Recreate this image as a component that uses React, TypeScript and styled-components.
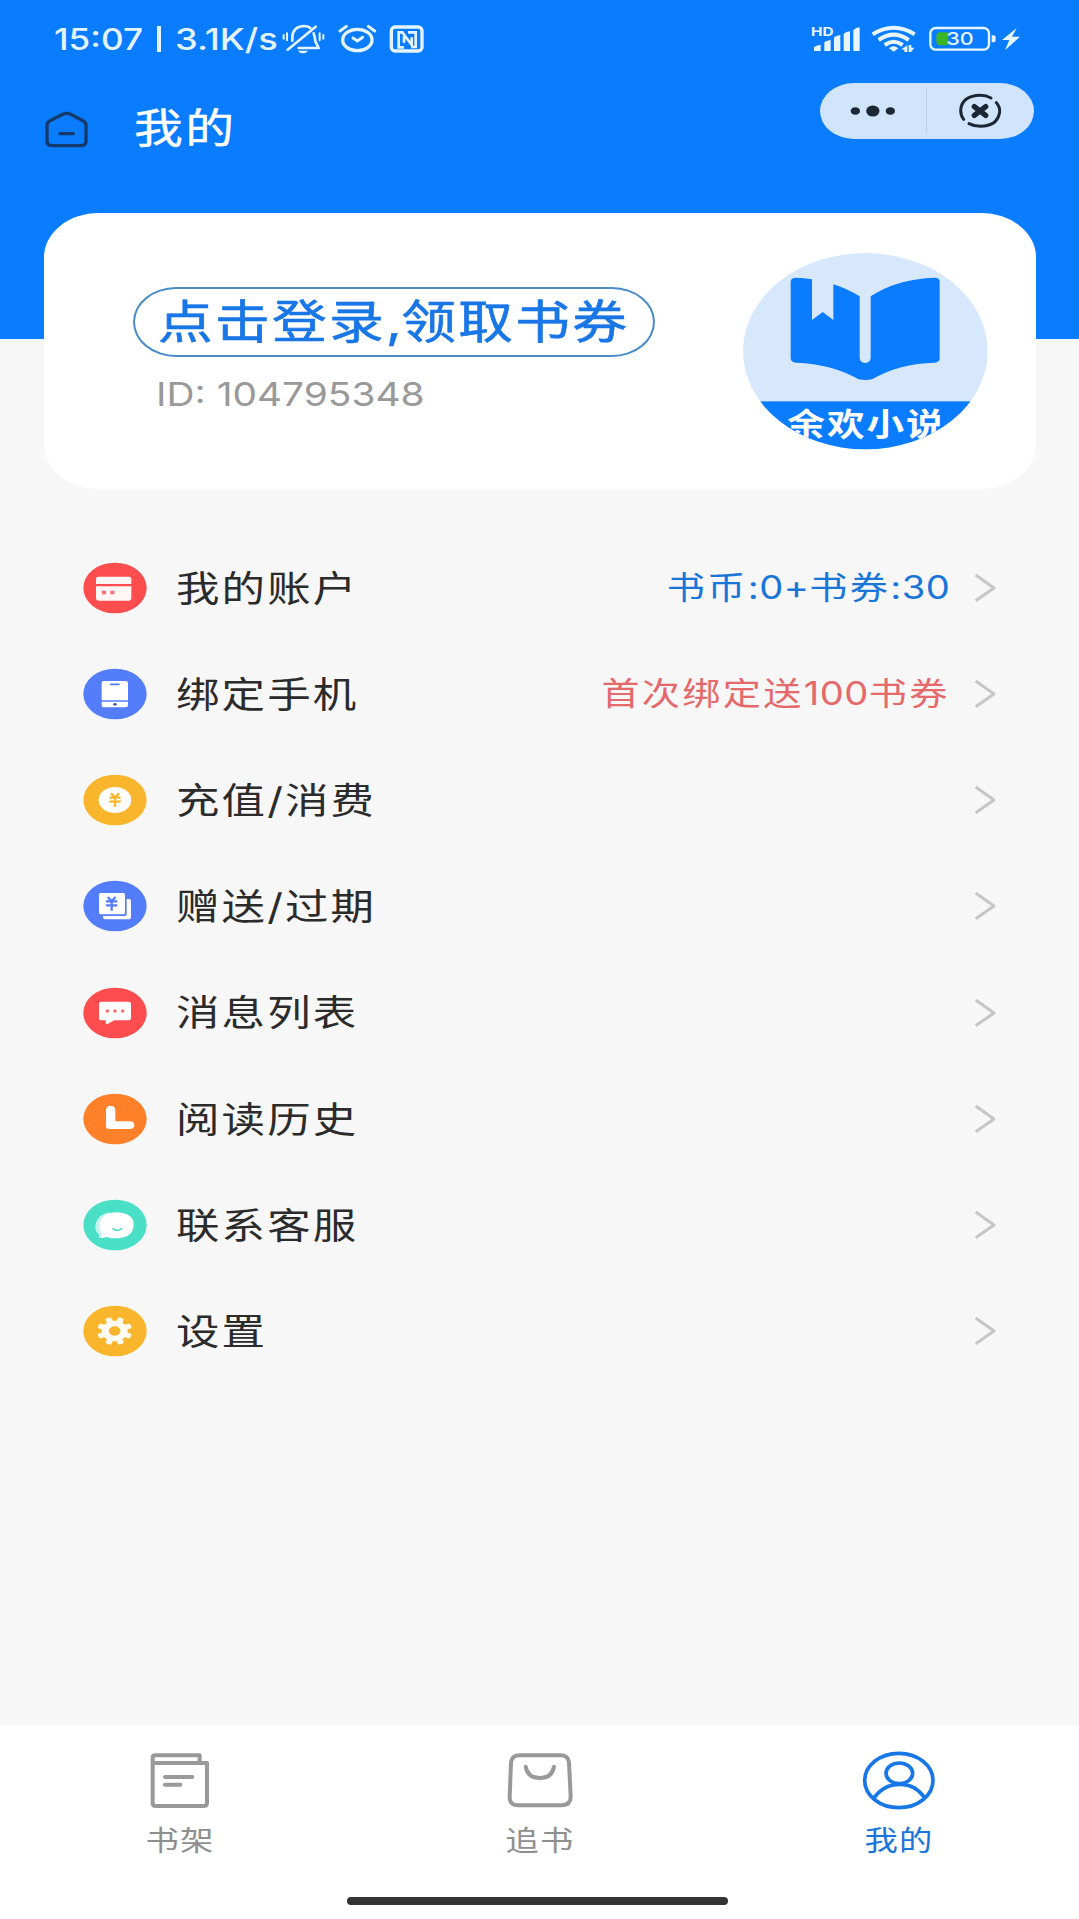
import React from "react";
import styled, { createGlobalStyle } from "styled-components";

const BLUE = "#0a7cff";

const GlobalStyle = createGlobalStyle`
  * { box-sizing: border-box; }
  body {
    margin: 0;
    background: #f7f7f7;
    font-family: Inter, "Noto Sans CJK SC", sans-serif;
  }
  svg { display: block; flex: none; }
`;

const Screen = styled.div`
  width: 1079px;
  height: 1919px;
  display: flex;
  flex-direction: column;
  overflow: hidden;
  background: #f7f7f7;
`;

/* Wide-set text: every label is stretched horizontally from its anchor side. */
const Wide = styled.span<{
  $size: number;
  $color: string;
  $k?: number;
  $ls?: number;
  $weight?: number;
  $stroke?: number;
  $from?: "left" | "right" | "center";
}>`
  display: inline-block;
  flex: none;
  white-space: pre;
  line-height: 1;
  font-size: ${(p) => p.$size}px;
  font-weight: ${(p) => p.$weight ?? 400};
  letter-spacing: ${(p) => p.$ls ?? 0}px;
  color: ${(p) => p.$color};
  -webkit-text-stroke: ${(p) => p.$stroke ?? 0}px ${(p) => p.$color};
  transform: scaleX(${(p) => p.$k ?? 1.19});
  transform-origin: ${(p) => p.$from ?? "left"} center;
`;

const Latin = styled.span<{ $ls: number }>`
  letter-spacing: ${(p) => p.$ls}px;
`;

const Header = styled.header`
  height: 338.5px;
  flex: none;
  background: ${BLUE};
`;

const StatusBar = styled.div`
  height: 78px;
  display: flex;
  align-items: center;
  padding: 0 59px 0 54px;
`;

const StatusText = styled.div`
  width: 228px;
  display: flex;
  align-items: center;
`;

const ClockSlot = styled.div`
  width: 102.5px;
`;

const StatusDivider = styled.div`
  width: 4px;
  height: 26px;
  margin-right: 14px;
  background: #e4f4ff;
`;

const StatusRight = styled.div`
  margin-left: auto;
`;

const TitleBar = styled.div`
  display: flex;
  align-items: flex-start;
  padding: 5px 45px 0 45px;
`;

const HomeButton = styled.div`
  width: 89px;
  padding-top: 28px;
`;

const Title = styled.div`
  padding-top: 25px;
`;

const Capsule = styled.div`
  margin-left: auto;
  width: 214px;
  height: 56px;
  border-radius: 34px / 28px;
  background: #d0e4fc;
  display: flex;
  align-items: center;
  margin-right: 0.5px;
`;

const CapsuleHalf = styled.div`
  flex: 1;
  display: flex;
  justify-content: center;
`;

const CapsuleDivider = styled.div`
  width: 1px;
  height: 44px;
  background: #b9cfe9;
`;

const Card = styled.section`
  width: 992.5px;
  height: 276px;
  flex: none;
  margin: -126px 0 0 43.5px;
  border-radius: 55px / 44px;
  background: #fff;
  display: flex;
  padding: 40px 48px 0 89px;
`;

const CardInfo = styled.div`
  padding-top: 34px;
`;

const LoginPill = styled.div`
  width: 522px;
  height: 70px;
  border: 2px solid #4a8cc8;
  border-radius: 43px / 35px;
  display: flex;
  align-items: center;
  padding: 0 0 2px 23.5px;
`;

const UserId = styled.div`
  padding: 21px 0 0 23.5px;
`;

const AvatarSlot = styled.div`
  margin-left: auto;
`;

const Menu = styled.ul`
  flex: 1;
  list-style: none;
  margin: 0;
  padding: 46.5px 82px 0 83px;
`;

const Row = styled.li`
  height: 106.15px;
  display: flex;
  align-items: center;
`;

const RowLabel = styled.div`
  flex: 1;
  padding: 2px 0 0 29px;
`;

const RowValue = styled.div`
  margin-right: 24px;
`;

const TabBar = styled.nav`
  height: 194px;
  flex: none;
  background: #fff;
  display: flex;
  flex-direction: column;
  align-items: center;
`;

const Tabs = styled.div`
  width: 1079px;
  height: 172px;
  display: flex;
`;

const Tab = styled.div`
  flex: 1;
  display: flex;
  flex-direction: column;
  align-items: center;
  padding-top: 26px;
  gap: 17px;
`;

const HomeIndicator = styled.div`
  width: 381px;
  height: 8px;
  margin-left: -4px;
  border-radius: 4px;
  background: #333;
`;

/* Letter spacing applies to the Chinese glyphs only; digits and punctuation are set tight. */
const mixed = (text: string, latin: number) =>
  text.split(/([\x20-\x7e]+)/).map((part, i) => (i % 2 ? <Latin key={i} $ls={latin}>{part}</Latin> : part));

const StatusIcons = () => (
  <svg width="142" height="30" viewBox="756 72 426 90" fill="none" stroke="#e4f4ff" strokeWidth="8" strokeLinecap="round">
    <path d="M773 149 L857 80" />
    <path d="M787 122 V110 Q790 79 822 78 Q834 78 841 84" />
    <path d="M851 100 Q855 112 856 124 L866 144 H806" strokeLinejoin="round" />
    <path d="M804 152 H834 Q829 160 819 160 Q809 160 804 152 Z" fill="#e4f4ff" stroke="none" />
    <path d="M761 105 V116 M771 100 V121 M869 100 V121 M880 105 V116" strokeWidth="6" />
    <ellipse cx="982" cy="120" rx="44" ry="32" strokeWidth="10" />
    <path d="M930 93 L949 79 M1015 79 L1034 93" strokeWidth="9" />
    <path d="M969 114 L982 123 L998 112" strokeWidth="9" />
    <rect x="1084" y="81" width="92" height="72" rx="11" strokeWidth="10" />
    <path d="M1122 142 H1106 V97 H1117 L1145 135 V112 M1122 108 V128 M1134 97 H1157 V141 H1143" strokeLinecap="butt" />
  </svg>
);

const SignalIcons = () => (
  <svg width="209" height="30" viewBox="94 72 627 90" fill="#e6f5ff">
    <text transform="translate(94 107) scale(1.24 1)" fontFamily="Inter, sans-serif" fontWeight="700" fontSize="37">HD</text>
    <path d="M103 153 V142 Q112 135 123 134 V153 Z M134 153 V127 Q142 121 153 120 V153 Z M163 153 V112 Q171 106 182 105 V153 Z M192 153 V101 Q200 95 211 94 V153 Z M221 153 V90 Q229 83 240 82 V153 Z" />
    <g fill="none" stroke="#e6f5ff" strokeWidth="12">
      <path d="M279 103 Q342 64 405 103" />
      <path d="M297 120 Q342 88 387 120" />
      <path d="M315 135 Q342 116 369 135" />
    </g>
    <path d="M328 145 Q342 133 356 145 L342 155 Z" />
    <path d="M365 148 L383 136 V156 H374 V149 Z M387 156 V135 H395 V143 H404 L394 156 Z" />
    <rect x="452" y="84" width="176" height="65" rx="16" fill="none" stroke="#e6f5ff" strokeWidth="7" />
    <path d="M483 97 H506 V136 H483 Q470 136 470 123 V110 Q470 97 483 97 Z" fill="#3cb527" />
    <path d="M636 106 H640 Q648 106 648 113 V120 Q648 127 640 127 H636 Z" />
    <text transform="translate(500 136) scale(1.22 1)" fontFamily="Inter, sans-serif" fontWeight="500" fontSize="53">30</text>
    <path d="M711 84 L667 120 H689 L676 151 L721 110 H697 Z" />
  </svg>
);

const HomeIcon = () => (
  <svg width="43" height="37" viewBox="45 330 129 111" fill="none" stroke="#143a6c" strokeWidth="10" strokeLinecap="round" strokeLinejoin="round">
    <path d="M51 373 Q51 364 60 359 L98 340 Q110 334 122 340 L159 359 Q168 364 168 373 V420 Q168 434 152 434 H67 Q51 434 51 420 Z" />
    <path d="M90 398 H130" />
  </svg>
);

const DotsIcon = () => (
  <svg width="46" height="12" viewBox="209 314 138 36" fill="#1c2733">
    <ellipse cx="225" cy="332" rx="14" ry="11.5" />
    <ellipse cx="277.5" cy="332" rx="20" ry="16.5" />
    <ellipse cx="330" cy="332" rx="14" ry="11.5" />
  </svg>
);

const CloseIcon = () => (
  <svg width="44" height="36" viewBox="533 277 132 108" fill="none" stroke="#1c2733" strokeWidth="9" strokeLinecap="round">
    <path d="M550 356 Q541 345 541 328 Q545 285 600 284 Q618 284 632 292" />
    <path d="M648 306 Q659 318 658 334 Q652 376 600 377 Q581 377 566 369" />
    <path d="M582 318 L616 344 M616 318 L582 344" strokeWidth="16" />
  </svg>
);

const Avatar = () => (
  <svg width="245" height="197" viewBox="131 157 735 591">
    <defs>
      <clipPath id="oval">
        <ellipse cx="498" cy="451.5" rx="367" ry="294.5" />
      </clipPath>
    </defs>
    <g clipPath="url(#oval)">
      <rect x="131" y="157" width="735" height="591" fill="#d8e8fc" />
      <rect x="131" y="602" width="735" height="150" fill={BLUE} />
      <text
        transform="translate(264 707) scale(1.2 1)"
        fontFamily='"Noto Sans CJK SC", sans-serif'
        fontWeight="700"
        fontSize="94"
        letterSpacing="5"
        fill="#fff"
      >
        余欢小说
      </text>
    </g>
    <path
      fill={BLUE}
      d="M274 244 Q274 231 290 231 Q316 231 338 236 V358 L370 334 L402 358 V251 Q443 264 481 287 V472 Q482 486 497 487 Q513 486 514 472 V287 Q592 235 706 231 Q721 231 721 243 V473 Q721 485 706 486 Q600 488 518 536 Q498 540 478 536 Q398 490 290 486 Q274 485 274 473 Z"
    />
  </svg>
);

const Badge = ({ top, color, children }: { top: number; color: string; children: React.ReactNode }) => (
  <svg width="64" height="52" viewBox={`71 ${top} 192 156`}>
    <ellipse cx="167" cy={top + 78} rx="95" ry="76" fill={color} />
    {children}
  </svg>
);

const AccountIcon = () => (
  <Badge top={65} color="#fd4d4f">
    <path d="M117 109 H209 Q216 109 216 116 V131 H110 V116 Q110 109 117 109 Z M110 138 H216 V174 Q216 181 209 181 H117 Q110 181 110 174 Z" fill="#fff6f5" />
    <path d="M128 151 H140 V162 H128 Z M153 151 H165 V162 H153 Z" fill="#fd6d6d" />
  </Badge>
);

const PhoneIcon = () => (
  <Badge top={384} color="#547dfb">
    <path d="M133 423 H199 Q206 423 206 430 V481 H127 V430 Q127 423 133 423 Z M127 485 H206 V496 Q206 502 199 502 H133 Q127 502 127 496 Z" fill="#fff" />
    <path d="M154 433 H179" stroke="#547dfb" strokeWidth="5" strokeLinecap="round" />
    <ellipse cx="167" cy="493" rx="5" ry="4" fill="#3556b8" />
  </Badge>
);

const Yen = ({ x, y, color }: { x: number; y: number; color: string }) => (
  <g transform={`translate(${x} ${y})`} stroke={color} strokeWidth="7" fill="none">
    <path d="M-12 -20 L0 -8 L12 -20 M-17 -7 H17 M-17 5 H17 M0 -8 V21" />
  </g>
);

const CoinIcon = () => (
  <Badge top={702} color="#f9b62c">
    <ellipse cx="167" cy="780" rx="49" ry="39" fill="#fff" />
    <Yen x={167} y={780} color="#f9b62c" />
  </Badge>
);

const GiftIcon = () => (
  <Badge top={1020} color="#547dfb">
    <rect x="119" y="1059" width="78" height="64" rx="5" fill="#fff" />
    <path d="M202 1077 H208 Q215 1077 215 1083 V1130 Q215 1138 207 1138 H138 Q131 1138 131 1132 V1128 H197 Q202 1128 202 1123 Z" fill="#fff" />
    <Yen x={157} y={1091} color="#547dfb" />
  </Badge>
);

const MessageIcon = () => (
  <Badge top={109} color="#fd4d4f">
    <path d="M125 153 H209 Q215 153 215 159 V203 Q215 209 208 209 H165 L143 221 Q139 222 139 209 H125 Q119 209 119 203 V159 Q119 153 125 153 Z" fill="#fff" />
    <g fill="#fd6d6d">
      <ellipse cx="144" cy="181" rx="5.5" ry="5" />
      <ellipse cx="167" cy="181" rx="5.5" ry="5" />
      <ellipse cx="190" cy="181" rx="5.5" ry="5" />
    </g>
  </Badge>
);

const HistoryIcon = () => (
  <Badge top={427} color="#fe8029">
    <path d="M140 479 Q140 465 154 465 Q168 465 168 479 V512 H212 Q225 513 225 524 Q225 535 212 535 H150 Q140 535 140 526 Z" fill="#fff" />
  </Badge>
);

const ServiceIcon = () => (
  <Badge top={745} color="#4adfc7">
    <path d="M108 826 Q112 792 152 785 V860 L134 856 Q126 862 117 861 Q121 856 118 851 Q107 841 108 826 Z" fill="#c4f5ed" />
    <path d="M174 785 Q224 788 223 823 Q221 862 172 863 Q152 863 141 858 Q131 864 124 861 Q131 854 127 847 Q120 838 121 823 Q124 787 174 785 Z" fill="#fff" />
    <path d="M161 834 Q174 845 187 834" stroke="#4adfc7" strokeWidth="5" fill="none" strokeLinecap="round" />
  </Badge>
);

const SettingsIcon = () => (
  <Badge top={1064} color="#f9b62c">
    <g transform="translate(166 1142) scale(1.25 1)" fill="#fffaf0">
      {[0, 45, 90, 135].map((a) => (
        <rect key={a} x="-7.5" y="-42" width="15" height="84" rx="4" transform={`rotate(${a + 22.5})`} />
      ))}
      <circle r="31" />
      <circle r="14" fill="#f9b62c" />
    </g>
  </Badge>
);

const Chevron = () => (
  <svg width="23" height="30" viewBox="1183 98 69 90" fill="none" stroke="#c6c6c6" strokeWidth="9" strokeLinejoin="round">
    <path d="M1188 104 L1243 143 L1188 181" />
  </svg>
);

const ShelfIcon = () => (
  <svg width="60" height="59" viewBox="151 124 180 177" fill="none" stroke="#999" strokeWidth="12" strokeLinejoin="round">
    <path d="M159 160 V143 Q159 137 167 137 H300 V160" />
    <path d="M159 160 H322 V281 Q322 289 313 289 H168 Q159 289 159 281 Z" />
    <path d="M196 202 H278 M196 225 H242" strokeLinecap="round" />
  </svg>
);

const BagIcon = () => (
  <svg width="68" height="59" viewBox="1218 124 204 177" fill="none" stroke="#999" strokeWidth="12" strokeLinecap="round">
    <path d="M1260 137 H1380 Q1405 137 1407 158 L1412 262 Q1412 286 1385 287 H1255 Q1228 286 1229 262 L1233 158 Q1235 137 1260 137 Z" />
    <path d="M1277 171 Q1283 205 1320 205 Q1356 205 1362 171" />
  </svg>
);

const UserIcon = () => (
  <svg width="74" height="59" viewBox="787 121 222 177" fill="none" stroke="#1877e6" strokeWidth="11">
    <ellipse cx="897.5" cy="209.5" rx="102.5" ry="81.5" />
    <ellipse cx="899" cy="188" rx="40" ry="31" />
    <path d="M823 262 Q852 221 900 221 Q948 221 975 262" />
  </svg>
);

interface Item {
  label: string;
  Icon: () => React.ReactElement;
  value?: string;
  color?: string;
}

const ITEMS: Item[] = [
  { label: "我的账户", Icon: AccountIcon, value: "书币:0+书券:30", color: "#1976d8" },
  { label: "绑定手机", Icon: PhoneIcon, value: "首次绑定送100书券", color: "#e5696b" },
  { label: "充值/消费", Icon: CoinIcon },
  { label: "赠送/过期", Icon: GiftIcon },
  { label: "消息列表", Icon: MessageIcon },
  { label: "阅读历史", Icon: HistoryIcon },
  { label: "联系客服", Icon: ServiceIcon },
  { label: "设置", Icon: SettingsIcon },
];

const TABS = [
  { label: "书架", Icon: ShelfIcon, color: "#8f8f8f" },
  { label: "追书", Icon: BagIcon, color: "#8f8f8f" },
  { label: "我的", Icon: UserIcon, color: "#1976d8" },
];

export default function App() {
  return (
    <Screen>
      <GlobalStyle />
      <Header>
        <StatusBar>
          <StatusText>
            <ClockSlot>
              <Wide $size={30} $color="#e4f4ff" $weight={500} $k={1.17}>15:07</Wide>
            </ClockSlot>
            <StatusDivider />
            <Wide $size={30} $color="#e4f4ff" $weight={500} $k={1.21}>3.1K/s</Wide>
          </StatusText>
          <StatusIcons />
          <StatusRight>
            <SignalIcons />
          </StatusRight>
        </StatusBar>
        <TitleBar>
          <HomeButton>
            <HomeIcon />
          </HomeButton>
          <Title>
            <Wide $size={41} $ls={2} $color="#fff" $stroke={0.4}>我的</Wide>
          </Title>
          <Capsule>
            <CapsuleHalf>
              <DotsIcon />
            </CapsuleHalf>
            <CapsuleDivider />
            <CapsuleHalf>
              <CloseIcon />
            </CapsuleHalf>
          </Capsule>
        </TitleBar>
      </Header>

      <Card>
        <CardInfo>
          <LoginPill>
            <Wide $size={46} $ls={1.9} $color="#1976e6" $stroke={0.6}>{mixed("点击登录,领取书券", -0.5)}</Wide>
          </LoginPill>
          <UserId>
            <Wide $size={33} $color="#999" $k={1.178}>ID: 104795348</Wide>
          </UserId>
        </CardInfo>
        <AvatarSlot>
          <Avatar />
        </AvatarSlot>
      </Card>

      <Menu>
        {ITEMS.map(({ label, Icon, value, color }) => (
          <Row key={label}>
            <Icon />
            <RowLabel>
              <Wide $size={36.5} $ls={1.8} $color="#2b2b2b">{label}</Wide>
            </RowLabel>
            {value && (
              <RowValue>
                <Wide $size={32} $ls={2} $color={color!} $from="right">{mixed(value, 0.4)}</Wide>
              </RowValue>
            )}
            <Chevron />
          </Row>
        ))}
      </Menu>

      <TabBar>
        <Tabs>
          {TABS.map(({ label, Icon, color }) => (
            <Tab key={label}>
              <Icon />
              <Wide $size={28} $ls={1} $color={color} $from="center">{label}</Wide>
            </Tab>
          ))}
        </Tabs>
        <HomeIndicator />
      </TabBar>
    </Screen>
  );
}
